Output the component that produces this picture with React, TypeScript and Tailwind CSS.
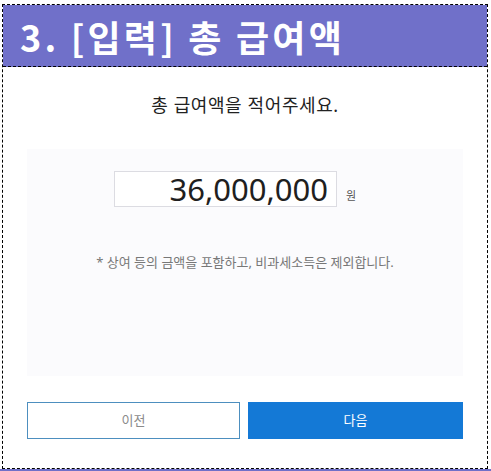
export default function App() {
  const font = { fontFamily: '"Noto Sans", "Noto Sans CJK KR", sans-serif' };
  return (
    <div className="relative w-[491px] h-[471px] bg-white overflow-hidden" style={font}>
      {/* Frame */}
      <div className="mt-[4px] ml-[2px] w-[486px] h-[465px] border border-dashed border-black flex flex-col">
        {/* Header */}
        <div className="h-[62px] bg-[#7070c9] border-b border-dashed border-black flex items-center pl-[17px]">
          <h1
            className="text-white font-bold text-[36px] leading-none tracking-[3.2px]"
            style={{ fontFamily: '"Noto Sans CJK KR", sans-serif' }}
          >
            3. [입력] 총 급여액
          </h1>
        </div>

        {/* Body */}
        <div className="flex-1 flex flex-col px-[24px]">
          <p className="mt-[26px] text-center text-[18px] leading-[24px] text-[#222] tracking-[0.6px]">
            총 급여액을 적어주세요.
          </p>

          <div className="mt-[32px] h-[227px] bg-[#fbfbfd] flex flex-col pt-[22px]">
            <div className="flex items-end pl-[87px]">
              <div className="w-[223px] h-[36px] bg-white border border-[#dcdce2] flex items-center justify-end pr-[8px]">
                <span className="text-[31px] leading-none text-[#1f1f1f]">36,000,000</span>
              </div>
              <span className="ml-[9px] mb-[6px] text-[11px] leading-none text-[#555]">원</span>
            </div>
            <p className="mt-[46px] text-center text-[13px] text-[#777]">
              * 상여 등의 금액을 포함하고, 비과세소득은 제외합니다.
            </p>
          </div>

          <div className="mt-[26px] flex gap-[8px]">
            <button className="w-[213px] h-[37px] border border-[#4d8fbf] bg-white text-[13px] text-[#8a8a8a]">
              이전
            </button>
            <button className="flex-1 h-[37px] bg-[#1479d6] text-[13px] text-white">
              다음
            </button>
          </div>
        </div>
      </div>
      {/* Bottom purple strip */}
      <div className="h-[2px] bg-[#7070c9]" />
    </div>
  );
}
